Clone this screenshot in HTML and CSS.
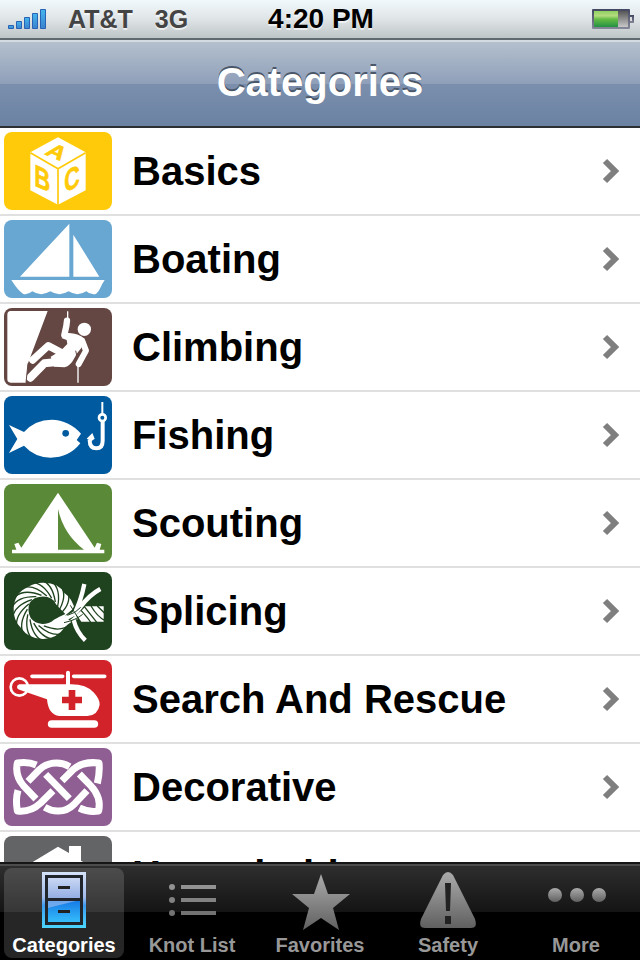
FILE: index.html
```html
<!DOCTYPE html>
<html lang="en">
<head>
<meta charset="utf-8">
<meta name="viewport" content="width=device-width, initial-scale=1">
<title>Categories</title>
<link rel="stylesheet" href="styles.css">
</head>
<body>
<svg class="defs" aria-hidden="true">
  <defs>
    <path id="chevron" d="M3 3L13 13L3 23"/>
    <linearGradient id="grey" x1="0" y1="0" x2="0" y2="1"><stop offset="0" stop-color="#ababab"/><stop offset="1" stop-color="#606060"/></linearGradient>
    <linearGradient id="signal" x1="0" y1="0" x2="0" y2="1"><stop offset="0" stop-color="#43b5ee"/><stop offset="1" stop-color="#3a82cd"/></linearGradient>
    <linearGradient id="charge" x1="0" y1="0" x2="0" y2="1"><stop offset="0" stop-color="#8fd05c"/><stop offset=".3" stop-color="#b4dc80"/><stop offset=".5" stop-color="#67bd45"/><stop offset="1" stop-color="#239044"/></linearGradient>
    <linearGradient id="empty" x1="0" y1="0" x2="0" y2="1"><stop offset="0" stop-color="#555"/><stop offset="1" stop-color="#c8c8c8"/></linearGradient>
    <linearGradient id="case" x1="0" y1="0" x2="0" y2="1"><stop offset="0" stop-color="#424660"/><stop offset="1" stop-color="#858898"/></linearGradient>
    <linearGradient id="frame" x1="0" y1="0" x2="0" y2="1"><stop offset="0" stop-color="#d5e3f8"/><stop offset=".45" stop-color="#a2baec"/><stop offset=".6" stop-color="#3d9df0"/><stop offset="1" stop-color="#4bd5ff"/></linearGradient>
    <linearGradient id="drawerTop" x1="0" y1="0" x2="0" y2="1"><stop offset="0" stop-color="#c9d7f3"/><stop offset="1" stop-color="#94afe5"/></linearGradient>
    <linearGradient id="drawerLow" x1="0" y1="0" x2="0" y2="1"><stop offset="0" stop-color="#167be6"/><stop offset="1" stop-color="#36bdfb"/></linearGradient>
  </defs>
</svg>

<div class="status">
  <div class="carrier">
    <svg width="40" height="20" viewBox="0 0 40 20" role="img" aria-label="Signal strength">
      <g fill="url(#signal)" stroke="#2862b4"><path d="M.5 16.500h5v3h-5z"/><path d="M8.500 12.500h5v7h-5z"/><path d="M16.500 8.500h5v11h-5z"/><path d="M24.500 4.500h5v15h-5z"/><path d="M32.500 .5h5v19h-5z"/></g>
    </svg>
    <span>AT&amp;T</span>
    <span>3G</span>
  </div>
  <time>4:20 PM</time>
  <svg class="battery" width="42" height="20" viewBox="0 0 42 20" role="img" aria-label="Battery">
    <rect width="38" height="20" rx="1" fill="url(#case)"/>
    <rect x="2" y="2" width="34" height="16" fill="url(#empty)"/>
    <rect x="2" y="2" width="24" height="16" fill="url(#charge)"/>
    <path d="M38 6h4v8h-4z" fill="url(#case)"/><path d="M38 8h2v4h-2z" fill="#ddd"/>
  </svg>
</div>

<header class="navbar"><h1>Categories</h1></header>

<main class="content">
  <ul class="rows">
    <li><a href="#basics">
      <svg class="thumb yellow" viewBox="12 12 324 234" aria-hidden="true">
        <path d="M174 28L257 73V187L174 230L91 187V73Z"/>
        <path class="cut" stroke-width="5" d="M91 74L174 122L257 74M174 122V232"/>
        <g class="letters"><text font-size="62" transform="matrix(1.1 .46 -.65 .8 132 78)">A</text><text font-size="92" transform="matrix(.72 .34 0 1 103 172)">B</text><text font-size="92" transform="matrix(.7 -.34 0 1 193 195)">C</text></g>
      </svg>
      <span>Basics</span><svg class="chevron" viewBox="0 0 18 26" aria-hidden="true"><use href="#chevron"/></svg></a></li>
    <li><a href="#boating">
      <svg class="thumb blue" viewBox="12 276 324 234" aria-hidden="true">
        <path d="M208 287V446H60ZM220 320L298 446H220ZM34 456H314Q306 468 302 478Q297 490 288 498Q270 501 259 490Q232 507 206 490Q178 507 151 490Q123 507 97 490Q84 501 70 498Q54 488 34 456Z"/>
      </svg>
      <span>Boating</span><svg class="chevron" viewBox="0 0 18 26" aria-hidden="true"><use href="#chevron"/></svg></a></li>
    <li><a href="#climbing">
      <svg class="thumb brown" viewBox="0 6 324 234" aria-hidden="true">
        <path d="M20 15H131L72 172L66 230H20Q10 230 10 220V26Q10 15 20 15Z"/>
        <path d="M195 82Q222 82 242 98L232 126Q217 142 210 158Q200 178 182 184L150 182L140 152L170 134L190 114L188 102L172 96Z"/>
        <circle cx="241" cy="70" r="20"/>
        <g class="line"><path stroke-width="4" d="M191 16V40M222 180V230"/><path stroke-width="19" stroke-linecap="round" stroke-linejoin="round" d="M189 44L187 60L181 87L205 94"/><path stroke-width="18" stroke-linecap="round" stroke-linejoin="round" d="M235 105L246 134L224 174"/><path stroke-width="22" stroke-linecap="round" stroke-linejoin="round" d="M180 144L133 119L86 162"/><path stroke-width="24" stroke-linecap="round" stroke-linejoin="round" d="M182 166L121 172L79 215"/></g>
        <path class="cut" stroke-width="3" d="M72 172L66 230M215 134L220 156"/>
      </svg>
      <span>Climbing</span><svg class="chevron" viewBox="0 0 18 26" aria-hidden="true"><use href="#chevron"/></svg></a></li>
    <li><a href="#fishing">
      <svg class="thumb navy" viewBox="12 276 324 234" aria-hidden="true">
        <path d="M27 363L72 384Q105 347 155 347Q207 348 243 389L230 408L241 418Q207 461 152 461Q104 460 72 425L27 447L52 405Z"/>
        <circle class="hole" cx="197" cy="388" r="10"/>
        <g class="line"><path stroke-width="6" d="M307 294V332"/><circle cx="307" cy="341" r="10" stroke-width="8"/><path stroke-width="12" d="M308 352V410Q308 433 289 433Q269 433 269 408"/></g>
        <path d="M260 404L277 387L284 404L274 412Z"/>
      </svg>
      <span>Fishing</span><svg class="chevron" viewBox="0 0 18 26" aria-hidden="true"><use href="#chevron"/></svg></a></li>
    <li><a href="#scouting">
      <svg class="thumb green" viewBox="12 12 324 234" aria-hidden="true">
        <path d="M174 38L284 203L291 188L304 192L299 209H313V220H36V209H49L43 192L55 188L64 203Z"/>
        <path class="hole" d="M174 87Q191 163 252 209H174Z"/>
      </svg>
      <span>Scouting</span><svg class="chevron" viewBox="0 0 18 26" aria-hidden="true"><use href="#chevron"/></svg></a></li>
    <li><a href="#splicing">
      <svg class="thumb forest" viewBox="0 6 324 234" aria-hidden="true">
        <defs><path id="lay" d="M-4 -92Q30 -80 38 -26"/></defs>
        <path d="M116 38Q163 37 181 69Q207 86 214 125L221 148Q196 157 181 173Q159 205 119 207Q75 208 51 174Q27 150 29 113Q32 68 73 50Q93 38 116 38Z"/>
        <path class="hole" d="M112 80Q145 78 156 103Q168 117 184 132Q166 140 150 149Q135 162 115 162Q92 160 80 144Q68 119 77 98Q90 80 112 80Z"/>
        <g class="cut" stroke-width="4" transform="translate(116 122)">
          <use href="#lay"/><use href="#lay" transform="rotate(20)"/><use href="#lay" transform="rotate(40)"/><use href="#lay" transform="rotate(60)"/><use href="#lay" transform="rotate(120)"/><use href="#lay" transform="rotate(140)"/><use href="#lay" transform="rotate(160)"/><use href="#lay" transform="rotate(180)"/><use href="#lay" transform="rotate(200)"/><use href="#lay" transform="rotate(220)"/><use href="#lay" transform="rotate(240)"/><use href="#lay" transform="rotate(260)"/><use href="#lay" transform="rotate(280)"/><use href="#lay" transform="rotate(300)"/><use href="#lay" transform="rotate(320)"/><use href="#lay" transform="rotate(340)"/>
        </g>
        <path d="M232 109H299V155H232L216 132Z"/>
        <path class="cut" stroke-width="4" d="M229 119Q252 144 262 160M241 110L279 158M261 108Q280 140 302 151M280 108L302 130"/>
        <path class="cut" stroke-width="20" d="M241 42Q231 93 213 125M289 57Q256 75 230 110L190 144M209 150Q218 186 244 211"/>
        <path class="line" stroke-width="13" d="M241 42Q231 93 209 137M289 57Q256 75 230 110Q210 139 177 145M209 150Q218 186 244 211"/>
        <path class="cut" stroke-width="3" d="M199 106L224 147M190 136Q215 130 230 112M180 158Q216 150 236 133"/>
      </svg>
      <span>Splicing</span><svg class="chevron" viewBox="0 0 18 26" aria-hidden="true"><use href="#chevron"/></svg></a></li>
    <li><a href="#rescue">
      <svg class="thumb red" viewBox="12 12 324 234" aria-hidden="true">
        <circle class="line" cx="58" cy="93" r="26" stroke-width="8"/>
        <path d="M58 85H198V50Q198 44 204 44Q210 44 210 50V85Q258 84 282 110Q300 130 299 146Q294 178 262 180H178Q145 177 141 130L58 101Q51 99 51 93Q51 87 58 85Z"/>
        <path class="line" stroke-width="11" stroke-linecap="round" d="M96 61H188M221 61H314"/>
        <path class="line" stroke-width="23" stroke-linecap="round" d="M155 204H283"/>
        <path class="hole" d="M206 102H226V122H246V142H226V162H206V142H186V122H206Z"/>
      </svg>
      <span>Search And Rescue</span><svg class="chevron" viewBox="0 0 18 26" aria-hidden="true"><use href="#chevron"/></svg></a></li>
    <li><a href="#decorative">
      <svg class="thumb purple" viewBox="0 6 324 234" aria-hidden="true">
        <g class="line" stroke-width="21" stroke-linejoin="round">
          <path d="M97 57Q72 46 40 51Q32 87 58 119L96 159"/>
          <path d="M72 106L105 72Q126 51 158 51Q178 51 197 62"/>
          <path d="M174 104L207 71Q236 45 285 51Q288 78 280 112"/>
          <path d="M125 85L196 158"/>
          <path d="M226 84L260 119Q293 154 284 195Q254 200 226 186"/>
          <path d="M42 133Q34 160 40 195Q79 200 110 171L147 134"/>
          <path d="M122 184Q142 196 164 195Q190 195 212 173L249 134"/>
        </g>
      </svg>
      <span>Decorative</span><svg class="chevron" viewBox="0 0 18 26" aria-hidden="true"><use href="#chevron"/></svg></a></li>
    <li><a href="#household">
      <svg class="thumb slate" viewBox="12 33 324 234" aria-hidden="true">
        <path d="M174 65L207 84V63H243V107L270 124V235H80V122Z"/>
      </svg>
      <span>Household</span><svg class="chevron" viewBox="0 0 18 26" aria-hidden="true"><use href="#chevron"/></svg></a></li>
  </ul>
</main>

<nav class="tabs" aria-label="Sections">
  <a class="tab current" href="#categories" aria-current="page">
    <svg viewBox="0 0 64 64" aria-hidden="true">
      <path fill="url(#frame)" d="M10 4H54V60H10Z"/><path fill="#20252b" d="M13 7H51V57H13Z"/>
      <path fill="url(#drawerTop)" d="M16 10H48V30H16Z"/><path fill="url(#drawerLow)" d="M16 33H48V54H16Z"/><path fill="#91b6ee" opacity=".7" d="M16 33H44Q32 36 16 40Z"/>
      <path fill="#222" d="M26 18H38V21H26ZM26 42H38V45H26Z"/>
    </svg><span>Categories</span></a>
  <a class="tab" href="#knots">
    <svg viewBox="0 0 64 64" aria-hidden="true"><g fill="#929292"><circle cx="12" cy="19" r="3"/><path d="M21 17H56V21H21Z"/></g><g fill="#828282"><circle cx="12" cy="32" r="3"/><path d="M21 30H56V34H21Z"/></g><g fill="#727272"><circle cx="12" cy="45" r="3"/><path d="M21 43H56V47H21Z"/></g></svg><span>Knot List</span></a>
  <a class="tab" href="#favorites">
    <svg viewBox="0 0 64 64" aria-hidden="true"><path fill="url(#grey)" d="M33 6L40 26H62L45 40L51 62L33 50L15 62L21 40L4 26H26Z"/></svg><span>Favorites</span></a>
  <a class="tab" href="#safety">
    <svg viewBox="0 0 64 64" aria-hidden="true"><path fill="url(#grey)" d="M27 7Q32 1 37 7L59 51Q62 60 55 60H9Q2 60 5 51Z"/><path fill="#222" d="M29 15H35L34 43H30ZM29 48H35V56H29Z"/></svg><span>Safety</span></a>
  <a class="tab" href="#more">
    <svg viewBox="0 0 64 64" aria-hidden="true"><g fill="url(#grey)"><circle cx="11" cy="27" r="7"/><circle cx="33" cy="27" r="7"/><circle cx="55" cy="27" r="7"/></g></svg><span>More</span></a>
</nav>
</body>
</html>
```

FILE: styles.css
```css
* { box-sizing: border-box; }
body {
  margin: 0;
  height: 100vh;
  display: flex;
  flex-direction: column;
  overflow: hidden;
  background: #fff;
  color: #000;
  font-family: "Liberation Sans", Arial, Helvetica, sans-serif;
  font-weight: bold;
}
svg { display: block; flex: none; }
a { color: inherit; text-decoration: none; }
.defs { position: absolute; width: 0; height: 0; }

.status {
  display: grid;
  grid-template-columns: 1fr auto 1fr;
  align-items: center;
  height: 40px;
  flex: none;
  padding: 0 6px 0 8px;
  background: linear-gradient(#f1f8fb, #dfe5e7 50%, #bec5c7);
  border-bottom: 2px solid #5f6a70;
  font-size: 28px;
  line-height: 38px;
  text-shadow: 0 2px 0 rgba(255, 255, 255, .6);
}
.carrier { display: flex; align-items: center; color: #444; font-size: 25px; }
.carrier span { margin-left: 20px; }
.carrier span + span { margin-left: 22px; }
.battery { justify-self: end; }

.navbar {
  height: 88px;
  flex: none;
  background: linear-gradient(#b4c0ce, #8f9fb9 50%, #7b8fad 50%, #6b82a3);
  border-top: 2px solid #d5dbe2;
  border-bottom: 2px solid #2d3136;
}
.navbar h1 {
  margin: 0;
  color: #fff;
  font-size: 40px;
  line-height: 80px;
  text-align: center;
  text-shadow: 0 -2px 0 #4a5769;
}

.content { flex: 1; min-height: 0; overflow: hidden; }
.rows { margin: 0; padding: 0; list-style: none; }
.rows a {
  display: flex;
  align-items: center;
  height: 88px;
  padding: 0 20px 0 4px;
  border-bottom: 2px solid #e0e0e0;
  font-size: 40px;
}
.rows span { flex: 1; margin-left: 20px; }
.thumb { width: 108px; height: 78px; border-radius: 8px; background: var(--tile); fill: #fff; }
.yellow { --tile: #ffca0a; }
.blue { --tile: #67a7d2; }
.brown { --tile: #644642; }
.navy { --tile: #005a9f; }
.green { --tile: #5a8a37; }
.forest { --tile: #1f421f; }
.red { --tile: #d2232a; }
.purple { --tile: #8f5e93; }
.slate { --tile: #636466; }
.cut { fill: none; stroke: var(--tile); }
.hole { fill: var(--tile); }
.letters { fill: var(--tile); stroke: var(--tile); stroke-width: 2px; }
.line { fill: none; stroke: #fff; }
.chevron { width: 18px; height: 26px; fill: none; stroke: #7f7f7f; stroke-width: 6px; }

.tabs {
  display: grid;
  grid-template-columns: repeat(5, 1fr);
  flex: none;
  height: 98px;
  padding-top: 2px;
  background: linear-gradient(#4c4c4c 2px, #2e2e2e 2px, #141414 48px, #000 48px) padding-box;
  border-top: 2px solid #161616;
}
.tab {
  display: flex;
  flex-direction: column;
  align-items: center;
  margin: 2px 4px 4px;
  border-radius: 8px;
  color: #989898;
  font-size: 20px;
  line-height: 26px;
}
.tab svg { width: 64px; height: 64px; }
.current { background: rgba(255, 255, 255, .15); color: #fff; }
```
